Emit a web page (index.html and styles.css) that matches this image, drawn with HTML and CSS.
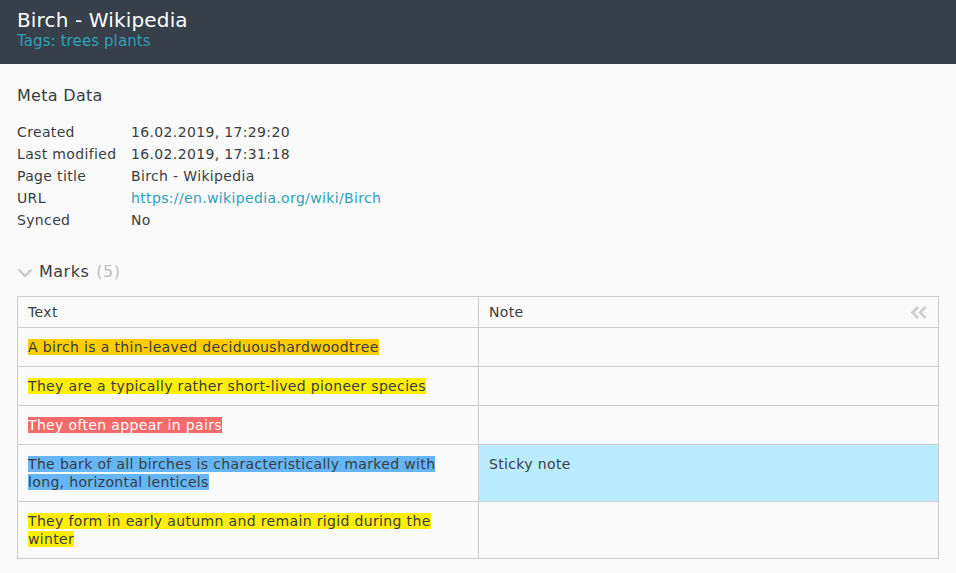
FILE: index.html
```html
<!DOCTYPE html>
<html>
<head>
<meta charset="utf-8">
<link rel="stylesheet" href="styles.css">
</head>
<body>
<header class="top">
  <div class="title">Birch - Wikipedia</div>
  <div class="tags">Tags: trees plants</div>
</header>
<main class="content">
  <h2 class="section">Meta Data</h2>
  <dl class="meta">
    <dt>Created</dt><dd>16.02.2019, 17:29:20</dd>
    <dt>Last modified</dt><dd>16.02.2019, 17:31:18</dd>
    <dt>Page title</dt><dd>Birch - Wikipedia</dd>
    <dt>URL</dt><dd><a class="link" href="#">https://en.wikipedia.org/wiki/Birch</a></dd>
    <dt>Synced</dt><dd>No</dd>
  </dl>
  <div class="marks-head">
    <svg class="chev" width="16" height="10" viewBox="0 0 16 10"><path d="M1.5 1.5 L8 8 L14.5 1.5" fill="none" stroke="#cccccc" stroke-width="2.6"/></svg>
    <span>Marks</span><span class="count">(5)</span>
  </div>
  <table class="marks">
    <thead>
      <tr><th class="c1">Text</th><th class="c2">Note<svg class="collapse" width="18" height="13" viewBox="0 0 18 13"><path d="M8 1 L2.5 6.5 L8 12 M15.5 1 L10 6.5 L15.5 12" fill="none" stroke="#cccccc" stroke-width="2.6"/></svg></th></tr>
    </thead>
    <tbody>
      <tr><td><span class="hl orange">A birch is a thin-leaved deciduoushardwoodtree</span></td><td></td></tr>
      <tr><td><span class="hl yellow">They are a typically rather short-lived pioneer species</span></td><td></td></tr>
      <tr><td><span class="hl red">They often appear in pairs</span></td><td></td></tr>
      <tr><td><span class="hl blue">The bark of all birches is characteristically marked with long, horizontal lenticels</span></td><td class="sticky">Sticky note</td></tr>
      <tr><td><span class="hl yellow">They form in early autumn and remain rigid during the winter</span></td><td></td></tr>
    </tbody>
  </table>
</main>
</body>
</html>
```

FILE: styles.css
```css
html, body {
  margin: 0;
  padding: 0;
  background: #fafafa;
  font-family: "DejaVu Sans", Verdana, sans-serif;
  color: #383d45;
}
.top {
  background: #363f4a;
  height: 64px;
  box-sizing: border-box;
  padding: 8px 17px 0;
}
.title {
  color: #ffffff;
  font-size: 20px;
  line-height: 25px;
  letter-spacing: 0.15px;
}
.tags {
  color: #2ea1b9;
  font-size: 15px;
  line-height: 17px;
  letter-spacing: 0.1px;
}
.content {
  padding: 21px 17px 0;
}
.section {
  margin: 0;
  font-weight: normal;
  font-size: 16px;
  line-height: 22px;
  letter-spacing: 0.3px;
}
.meta {
  margin: 14px 0 0;
  display: grid;
  grid-template-columns: 114px 1fr;
  font-size: 14px;
  line-height: 22px;
  letter-spacing: 0.35px;
}
.meta dt, .meta dd { margin: 0; }
.link {
  color: #2ea1b9;
  text-decoration: none;
}
.marks-head {
  margin-top: 30px;
  display: flex;
  align-items: center;
  font-size: 16px;
  line-height: 22px;
  letter-spacing: 0.5px;
}
.chev { margin-right: 6px; margin-top: 1px; }
.count { color: #bdbdbd; margin-left: 7px; }
.marks {
  margin-top: 13px;
  width: 922px;
  border-collapse: collapse;
  font-size: 14px;
  letter-spacing: 0.35px;
  table-layout: fixed;
}
.marks th, .marks td {
  border: 1px solid #cccccc;
  text-align: left;
  vertical-align: top;
  padding: 10px;
  line-height: 18px;
}
.marks th {
  font-weight: normal;
  padding-top: 6px;
  padding-bottom: 6px;
}
.c1 { width: 440px; }
.c2 { position: relative; }
.collapse {
  position: absolute;
  right: 10px;
  top: 9px;
}
.orange { background: #ffcc00; }
.yellow { background: #ffee00; }
.red { background: #f46a6a; color: #fff; }
.blue { background: #66b5f5; }
.sticky { background: #bbecfd; }
```
